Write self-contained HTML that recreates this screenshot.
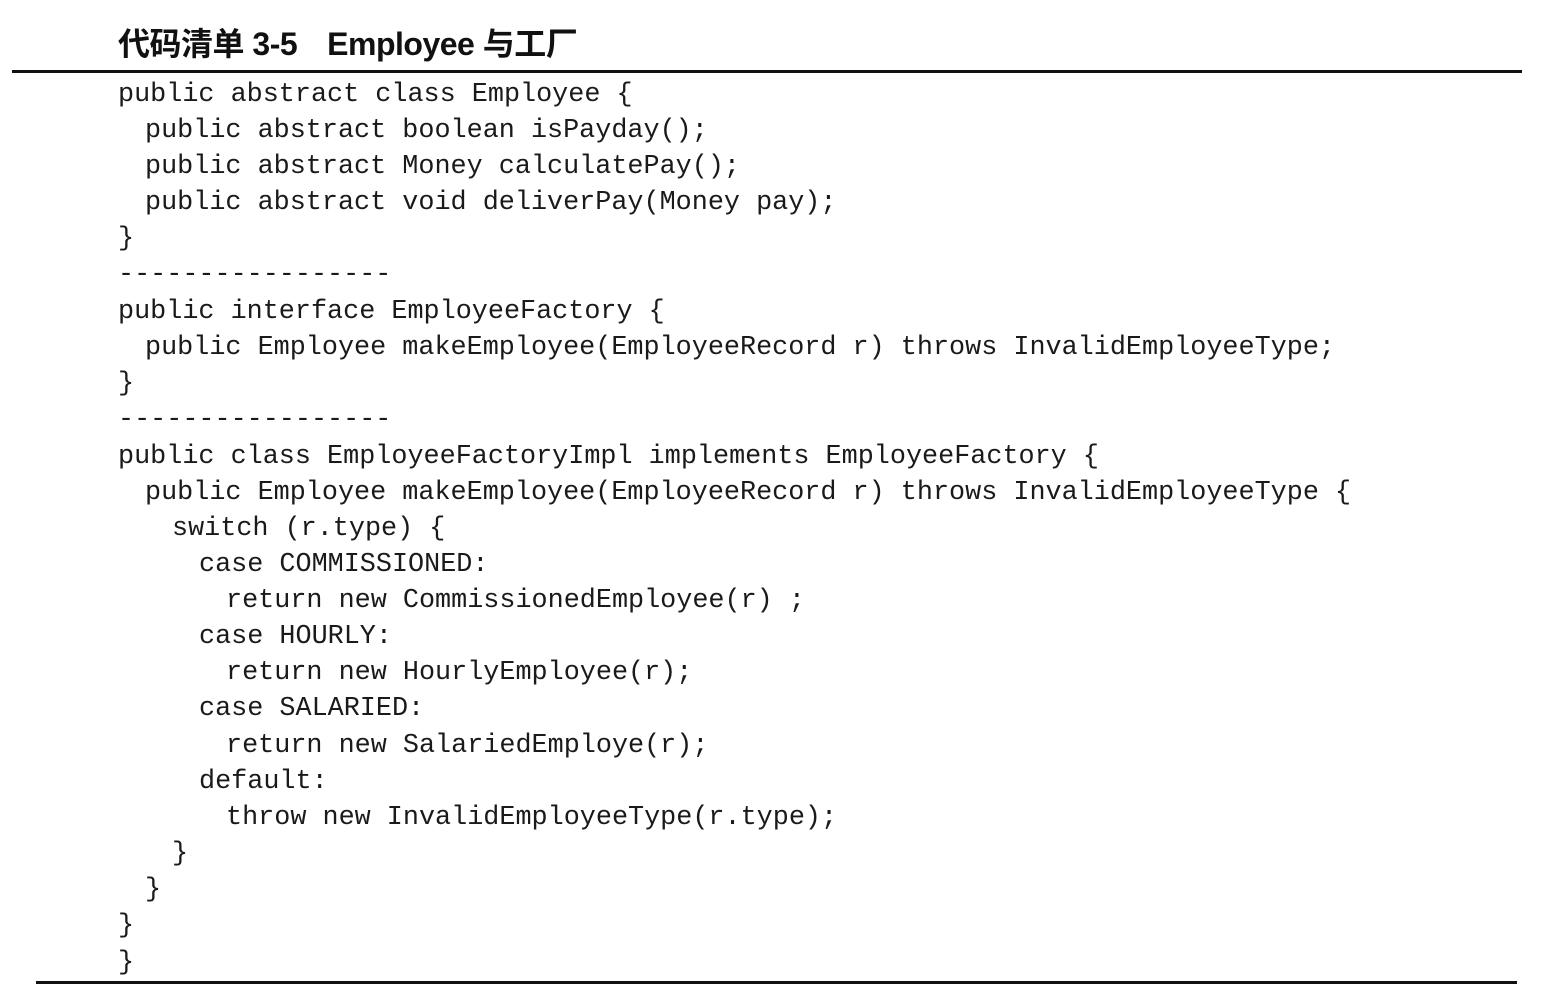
<!DOCTYPE html>
<html><head><meta charset="utf-8"><style>
html,body{margin:0;padding:0;background:#fff;}
body{width:1557px;height:1006px;position:relative;overflow:hidden;}
.t{position:absolute;left:118px;top:19px;font-family:"Liberation Sans","Noto Sans CJK SC",sans-serif;font-weight:bold;font-size:32px;color:#111;white-space:pre;letter-spacing:-0.5px;}
.r1{position:absolute;left:12px;top:70px;width:1510px;height:3px;background:#111;}
.r2{position:absolute;left:36px;top:981px;width:1481px;height:3px;background:#111;}
.l{position:absolute;font-family:"Liberation Mono","DejaVu Sans Mono",monospace;font-size:26.8px;line-height:36px;color:#1a1a1a;white-space:pre;}
</style></head><body>
<div class="t">代码清单 3-5<span style="display:inline-block;width:30px"></span>Employee 与工厂</div>
<div class="r1"></div>
<div class="l" style="left:118px;top:77px">public abstract class Employee {</div>
<div class="l" style="left:145px;top:113px">public abstract boolean isPayday();</div>
<div class="l" style="left:145px;top:149px">public abstract Money calculatePay();</div>
<div class="l" style="left:145px;top:185px">public abstract void deliverPay(Money pay);</div>
<div class="l" style="left:118px;top:221px">}</div>
<div class="l" style="left:118px;top:257px">-----------------</div>
<div class="l" style="left:118px;top:294px">public interface EmployeeFactory {</div>
<div class="l" style="left:145px;top:330px">public Employee makeEmployee(EmployeeRecord r) throws InvalidEmployeeType;</div>
<div class="l" style="left:118px;top:366px">}</div>
<div class="l" style="left:118px;top:402px">-----------------</div>
<div class="l" style="left:118px;top:439px">public class EmployeeFactoryImpl implements EmployeeFactory {</div>
<div class="l" style="left:145px;top:475px">public Employee makeEmployee(EmployeeRecord r) throws InvalidEmployeeType {</div>
<div class="l" style="left:172px;top:511px">switch (r.type) {</div>
<div class="l" style="left:199px;top:547px">case COMMISSIONED:</div>
<div class="l" style="left:226px;top:583px">return new CommissionedEmployee(r) ;</div>
<div class="l" style="left:199px;top:619px">case HOURLY:</div>
<div class="l" style="left:226px;top:655px">return new HourlyEmployee(r);</div>
<div class="l" style="left:199px;top:691px">case SALARIED:</div>
<div class="l" style="left:226px;top:728px">return new SalariedEmploye(r);</div>
<div class="l" style="left:199px;top:764px">default:</div>
<div class="l" style="left:226px;top:800px">throw new InvalidEmployeeType(r.type);</div>
<div class="l" style="left:172px;top:836px">}</div>
<div class="l" style="left:145px;top:872px">}</div>
<div class="l" style="left:118px;top:908px">}</div>
<div class="l" style="left:118px;top:945px">}</div>
<div class="r2"></div>
</body></html>
